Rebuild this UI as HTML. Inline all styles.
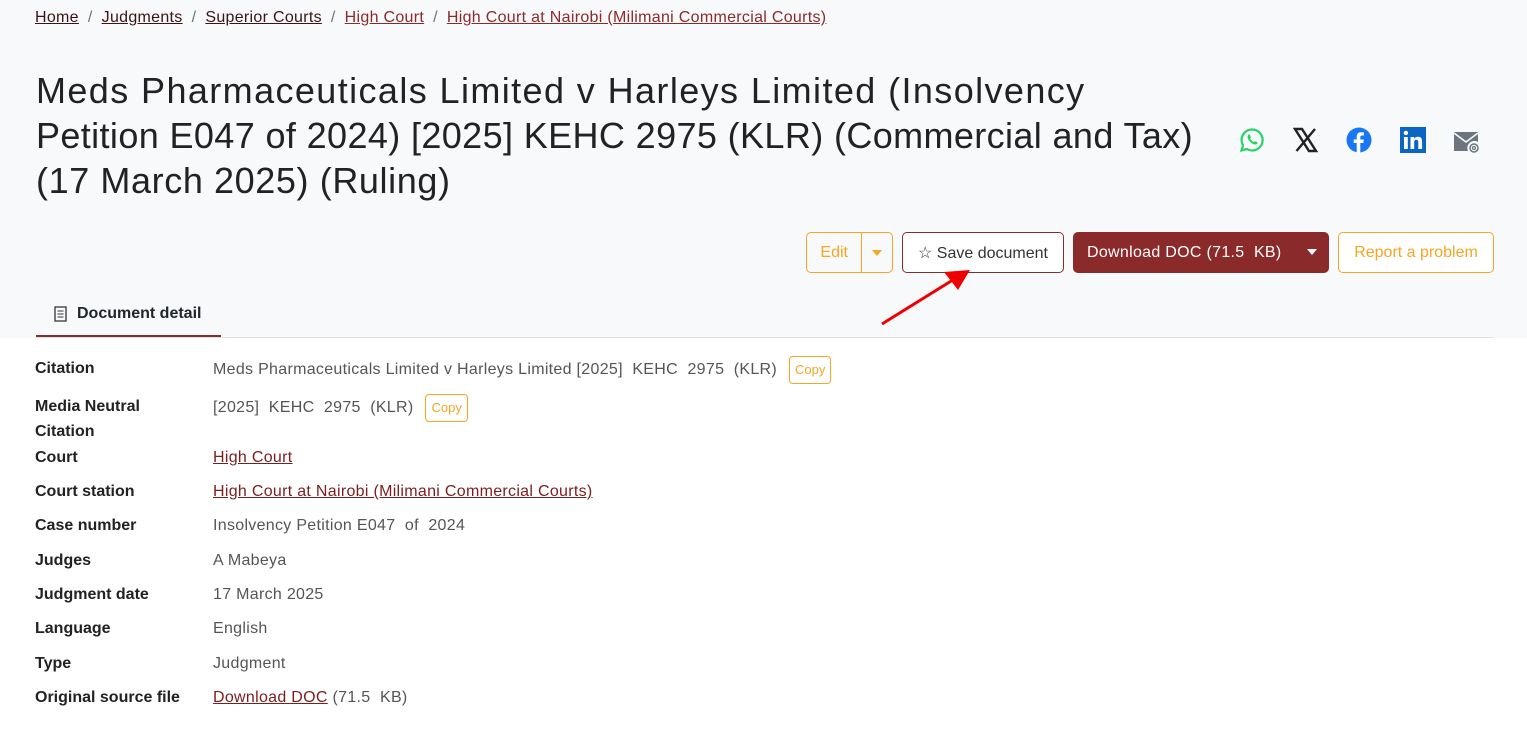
<!DOCTYPE html>
<html><head><meta charset="utf-8"><style>
*{box-sizing:border-box;margin:0;padding:0}
body{width:1527px;height:731px;overflow:hidden;font-family:"Liberation Sans",sans-serif;background:#fff;color:#212529}
.top{position:absolute;left:0;top:0;width:1527px;height:338px;background:#f8f9fa}
a{color:#7b1e1e;text-decoration:underline}
.bc{position:absolute;left:35px;top:9px;font-size:16px;color:#6c757d;letter-spacing:0.3px;white-space:nowrap}
.bc a{color:#3b1414}
.bc a.r{color:#8b2a2a}
.bc span{margin:0 9px}
h1{position:absolute;left:36px;top:68px;font-size:36px;font-weight:400;line-height:45px;color:#222;white-space:nowrap;letter-spacing:0.2px}
.ic{position:absolute;top:127px}
.btn{position:absolute;top:232px;height:41px;border-radius:5px;font-size:16px;display:flex;align-items:center;justify-content:center}
.tab{position:absolute;left:36px;top:292px;width:185px;height:45px;border-bottom:2px solid #8b2a2a;font-size:16px;font-weight:700;display:flex;align-items:center;padding-left:18px;gap:10px}
.line{position:absolute;left:36px;top:337px;width:1458px;height:1px;background:#dee2e6}
.row{position:absolute;left:35px;font-size:16px}
.row b{position:absolute;left:0;top:0;width:130px;font-weight:700;color:#222;line-height:25px}
.row .v{position:absolute;left:178px;top:0;white-space:nowrap;color:#555;line-height:25px;letter-spacing:0.3px}
.cp{display:inline-block;border:1px solid #f5a623;color:#f5a623;border-radius:4px;font-size:13px;padding:4px 5px;margin-left:12px;line-height:18px;vertical-align:middle;letter-spacing:0}
</style></head><body>
<div class="top"></div>
<div class="bc"><a href="#">Home</a><span>/</span><a href="#">Judgments</a><span>/</span><a href="#">Superior Courts</a><span>/</span><a class="r" href="#">High Court</a><span>/</span><a class="r" href="#">High Court at Nairobi (Milimani Commercial Courts)</a></div>
<h1><span style="letter-spacing:1.4px">Meds Pharmaceuticals Limited v Harleys Limited (Insolvency</span><br><span style="letter-spacing:0.38px">Petition E047 of 2024) [2025] KEHC 2975 (KLR) (Commercial and Tax)</span><br><span style="letter-spacing:0.6px">(17 March 2025) (Ruling)</span></h1>
<svg class="ic" style="left:1239px" width="26" height="26" viewBox="0 0 26 26"><path d="M13 2.5a10.5 10.5 0 0 0-9 15.8L2.5 23.5l5.4-1.4A10.5 10.5 0 1 0 13 2.5z" fill="none" stroke="#25d366" stroke-width="2.2"/><path d="M9 8c.5-1 1.5-.8 2 0l.8 2c.2.6-.8 1.3-.6 1.7.8 1.5 2 2.6 3.4 3.2.4.2 1-.8 1.6-.7l2 .9c.6.4.4 1.4-.4 2-2 1.4-5.3-.7-7.3-3C8.8 12.2 8 9.6 9 8z" fill="#25d366"/></svg>
<svg class="ic" style="left:1293px" width="25" height="26" viewBox="0 0 25 26"><path d="M2 2h7l14 22h-7z" fill="none" stroke="#222" stroke-width="2.4"/><path d="M22 2L3.5 24" stroke="#222" stroke-width="2.4"/></svg>
<svg class="ic" style="left:1346px" width="26" height="26" viewBox="0 0 26 26"><circle cx="13" cy="13" r="12.5" fill="#1877f2"/><path d="M14.3 25.5V16h3l.5-3.5h-3.5v-2.2c0-1 .4-1.8 1.9-1.8h1.7V5.4c-.4 0-1.6-.2-2.8-.2-2.8 0-4.4 1.6-4.4 4.6v2.7H7.7V16h3v9.5z" fill="#fff"/></svg>
<svg class="ic" style="left:1400px" width="26" height="26" viewBox="0 0 26 26"><rect width="26" height="26" fill="#0a66c2"/><rect x="4" y="10" width="3.8" height="12" fill="#fff"/><circle cx="5.9" cy="5.9" r="2.2" fill="#fff"/><path d="M10.5 10h3.6v1.7c.6-1.1 2-2 3.8-2 3.6 0 4.2 2.3 4.2 5.4V22h-3.8v-6c0-1.5 0-3.2-2-3.2s-2.1 1.5-2.1 3.1V22h-3.7z" fill="#fff"/></svg>
<svg class="ic" style="left:1453px;top:129px" width="28" height="26" viewBox="0 0 28 26"><path d="M1 3h24v10a7 7 0 0 0-10 9H1z" fill="#6c757d"/><path d="M1 4l12 9 12-9" fill="none" stroke="#f8f9fa" stroke-width="1.6"/><circle cx="21" cy="19" r="4" fill="none" stroke="#6c757d" stroke-width="1.5"/><circle cx="21" cy="19" r="1.5" fill="none" stroke="#6c757d" stroke-width="1.2"/></svg>
<div class="btn" style="left:806px;width:87px;border:1px solid #f5a623;color:#f5a623;justify-content:flex-start"><span style="width:55px;text-align:center">Edit</span><span style="border-left:1px solid #f5a623;height:39px;width:31px;display:flex;align-items:center;justify-content:center"><span style="border:5px solid transparent;border-top:6px solid #f5a623;margin-top:5px"></span></span></div>
<div class="btn" style="left:902px;width:162px;border:1px solid #8b2a2a;color:#333;background:#fff">☆&nbsp;Save document</div>
<div class="btn" style="left:1073px;width:256px;background:#8b2a2a;color:#fff;justify-content:flex-start;padding-left:14px;letter-spacing:0.3px">Download DOC (71.5&nbsp; KB)<span style="position:absolute;right:12px;top:17px;border:5px solid transparent;border-top:6px solid #fff"></span></div>
<div class="btn" style="left:1338px;width:156px;border:1px solid #f5a623;color:#f5a623;background:#fff">Report a problem</div>
<svg style="position:absolute;left:878px;top:266px" width="100" height="62"><path d="M4 58L78 12" stroke="#e00" stroke-width="3"/><path d="M92 4L66 6 80 24z" fill="#e00"/></svg>
<div class="tab"><svg width="13" height="16" viewBox="0 0 13 16"><path d="M1 1h11v14H1z" fill="none" stroke="#333" stroke-width="1.3"/><path d="M3.5 5h6M3.5 8h6M3.5 11h6" stroke="#333"/></svg>Document detail</div>
<div class="line"></div>
<div class="row" style="top:356px"><b>Citation</b><div class="v">Meds Pharmaceuticals Limited v Harleys Limited [2025]&nbsp; KEHC&nbsp; 2975&nbsp; (KLR)<span class="cp">Copy</span></div></div>
<div class="row" style="top:394px"><b>Media Neutral Citation</b><div class="v">[2025]&nbsp; KEHC&nbsp; 2975&nbsp; (KLR)<span class="cp">Copy</span></div></div>
<div class="row" style="top:445px"><b>Court</b><div class="v"><a href="#">High Court</a></div></div>
<div class="row" style="top:479px"><b>Court station</b><div class="v"><a href="#">High Court at Nairobi (Milimani Commercial Courts)</a></div></div>
<div class="row" style="top:513px"><b>Case number</b><div class="v">Insolvency Petition E047&nbsp; of&nbsp; 2024</div></div>
<div class="row" style="top:548px"><b>Judges</b><div class="v">A Mabeya</div></div>
<div class="row" style="top:582px"><b>Judgment date</b><div class="v">17 March 2025</div></div>
<div class="row" style="top:616px"><b>Language</b><div class="v">English</div></div>
<div class="row" style="top:651px"><b>Type</b><div class="v">Judgment</div></div>
<div class="row" style="top:685px"><b style="width:170px">Original source file</b><div class="v"><a href="#">Download DOC</a> (71.5&nbsp; KB)</div></div>
</body></html>
